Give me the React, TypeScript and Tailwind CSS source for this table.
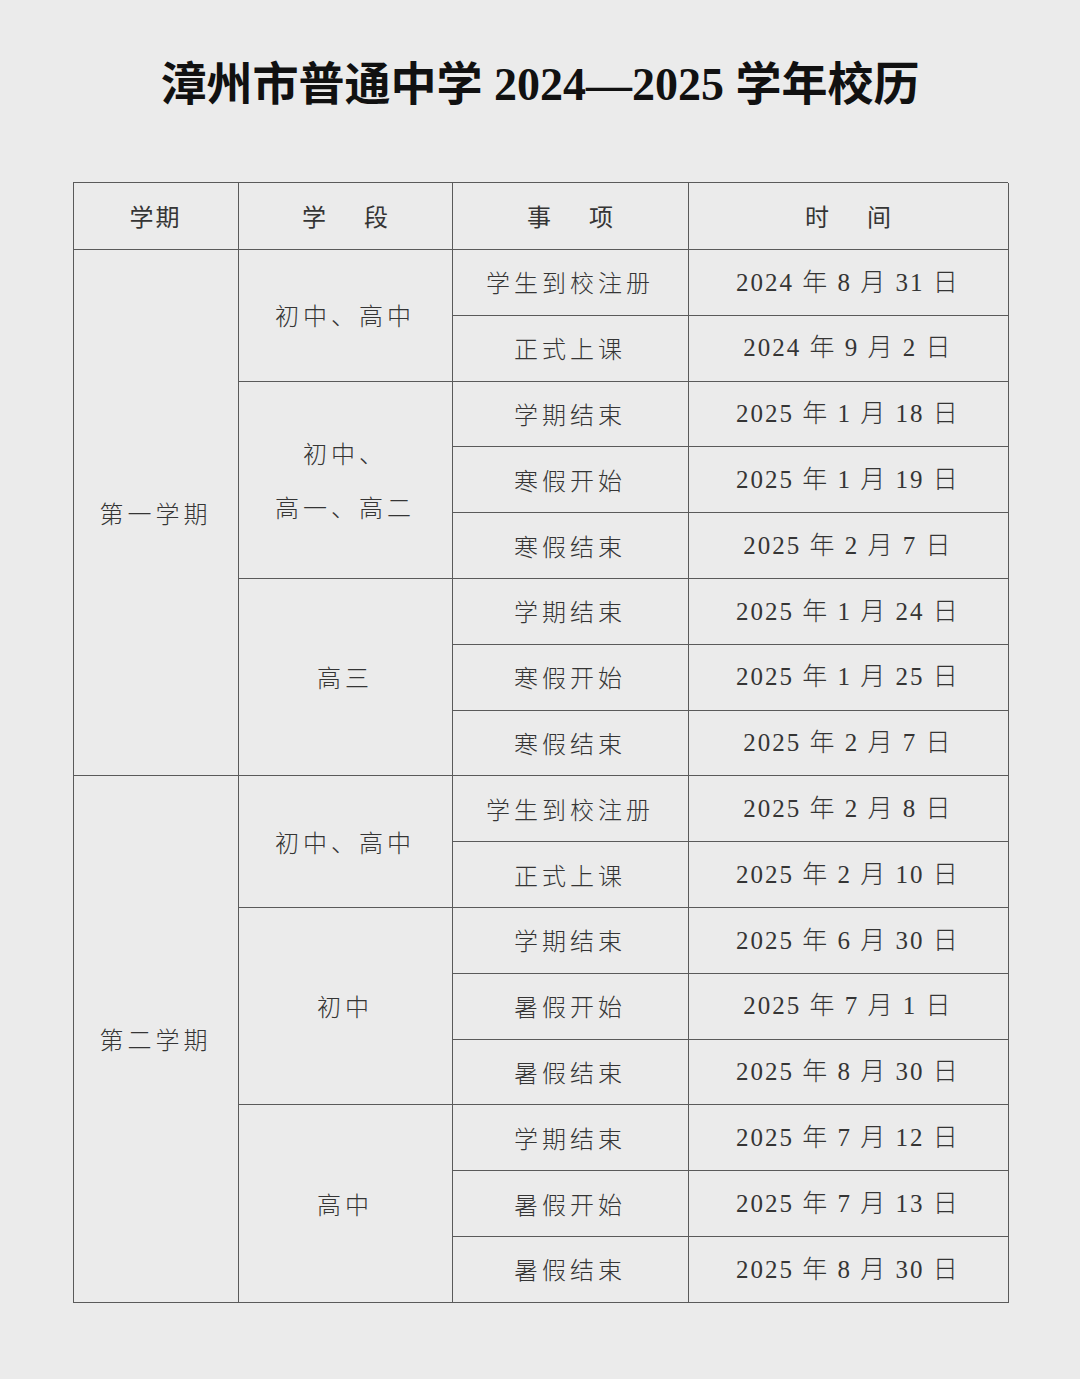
import React from "react"

type Row = { item: string; date: string }
type Group = { stage: string[]; rows: Row[] }
type Term = { name: string; groups: Group[] }

const terms: Term[] = [
  {
    name: "第一学期",
    groups: [
      {
        stage: ["初中、高中"],
        rows: [
          { item: "学生到校注册", date: "2024 年 8 月 31 日" },
          { item: "正式上课", date: "2024 年 9 月 2 日" },
        ],
      },
      {
        stage: ["初中、", "高一、高二"],
        rows: [
          { item: "学期结束", date: "2025 年 1 月 18 日" },
          { item: "寒假开始", date: "2025 年 1 月 19 日" },
          { item: "寒假结束", date: "2025 年 2 月 7 日" },
        ],
      },
      {
        stage: ["高三"],
        rows: [
          { item: "学期结束", date: "2025 年 1 月 24 日" },
          { item: "寒假开始", date: "2025 年 1 月 25 日" },
          { item: "寒假结束", date: "2025 年 2 月 7 日" },
        ],
      },
    ],
  },
  {
    name: "第二学期",
    groups: [
      {
        stage: ["初中、高中"],
        rows: [
          { item: "学生到校注册", date: "2025 年 2 月 8 日" },
          { item: "正式上课", date: "2025 年 2 月 10 日" },
        ],
      },
      {
        stage: ["初中"],
        rows: [
          { item: "学期结束", date: "2025 年 6 月 30 日" },
          { item: "暑假开始", date: "2025 年 7 月 1 日" },
          { item: "暑假结束", date: "2025 年 8 月 30 日" },
        ],
      },
      {
        stage: ["高中"],
        rows: [
          { item: "学期结束", date: "2025 年 7 月 12 日" },
          { item: "暑假开始", date: "2025 年 7 月 13 日" },
          { item: "暑假结束", date: "2025 年 8 月 30 日" },
        ],
      },
    ],
  },
]

const cell = "flex items-center justify-center border-r-[1.5px] border-b-[1.5px] border-[#5a5a5a]"
const cjk = "[font-family:'Noto_Sans_CJK_SC',sans-serif]"

export default function App() {
  return (
    <div className="min-h-[1379px] w-full bg-[#ebebeb] text-[#353535]">
      <h1 className="pt-[56px] text-center text-[46px] font-bold leading-[58px] text-[#111] [font-family:'Liberation_Serif','Noto_Sans_CJK_SC',serif]">
        漳州市普通中学 2024—2025 学年校历
      </h1>

      <div className="mx-auto mt-[68px] w-[935px]">
        <div className="grid grid-cols-[165px_214px_236px_320px] border-l-[1.5px] border-t-[1.5px] border-[#5a5a5a] text-[24px] font-light">
          {/* header */}
          <div className={`${cell} h-[67px] font-normal tracking-[2px] ${cjk}`}>学期</div>
          <div className={`${cell} h-[67px] font-normal ${cjk}`}>学<span className="w-[38px]" />段</div>
          <div className={`${cell} h-[67px] font-normal ${cjk}`}>事<span className="w-[38px]" />项</div>
          <div className={`${cell} h-[67px] font-normal ${cjk}`}>时<span className="w-[38px]" />间</div>

          {terms.map((term) => {
            const termRows = term.groups.reduce((n, g) => n + g.rows.length, 0)
            return (
              <React.Fragment key={term.name}>
                <div
                  className={`${cell} col-start-1 tracking-[4px] ${cjk}`}
                  style={{ gridRow: `span ${termRows}` }}
                >
                  {term.name}
                </div>
                {term.groups.map((g, gi) => (
                  <React.Fragment key={gi}>
                    <div
                      className={`${cell} col-start-2 flex-col leading-[54px] tracking-[4px] ${cjk}`}
                      style={{ gridRow: `span ${g.rows.length}` }}
                    >
                      {g.stage.map((s) => (
                        <span key={s}>{s}</span>
                      ))}
                    </div>
                    {g.rows.map((r, ri) => (
                      <React.Fragment key={ri}>
                        <div className={`${cell} col-start-3 h-[65.8px] tracking-[4px] ${cjk}`}>{r.item}</div>
                        <div className={`${cell} col-start-4 h-[65.8px] whitespace-pre text-[25px] tracking-[2px] [font-family:'Liberation_Serif','Noto_Sans_CJK_SC',serif]`}>
                          {r.date}
                        </div>
                      </React.Fragment>
                    ))}
                  </React.Fragment>
                ))}
              </React.Fragment>
            )
          })}
        </div>
      </div>
    </div>
  )
}
